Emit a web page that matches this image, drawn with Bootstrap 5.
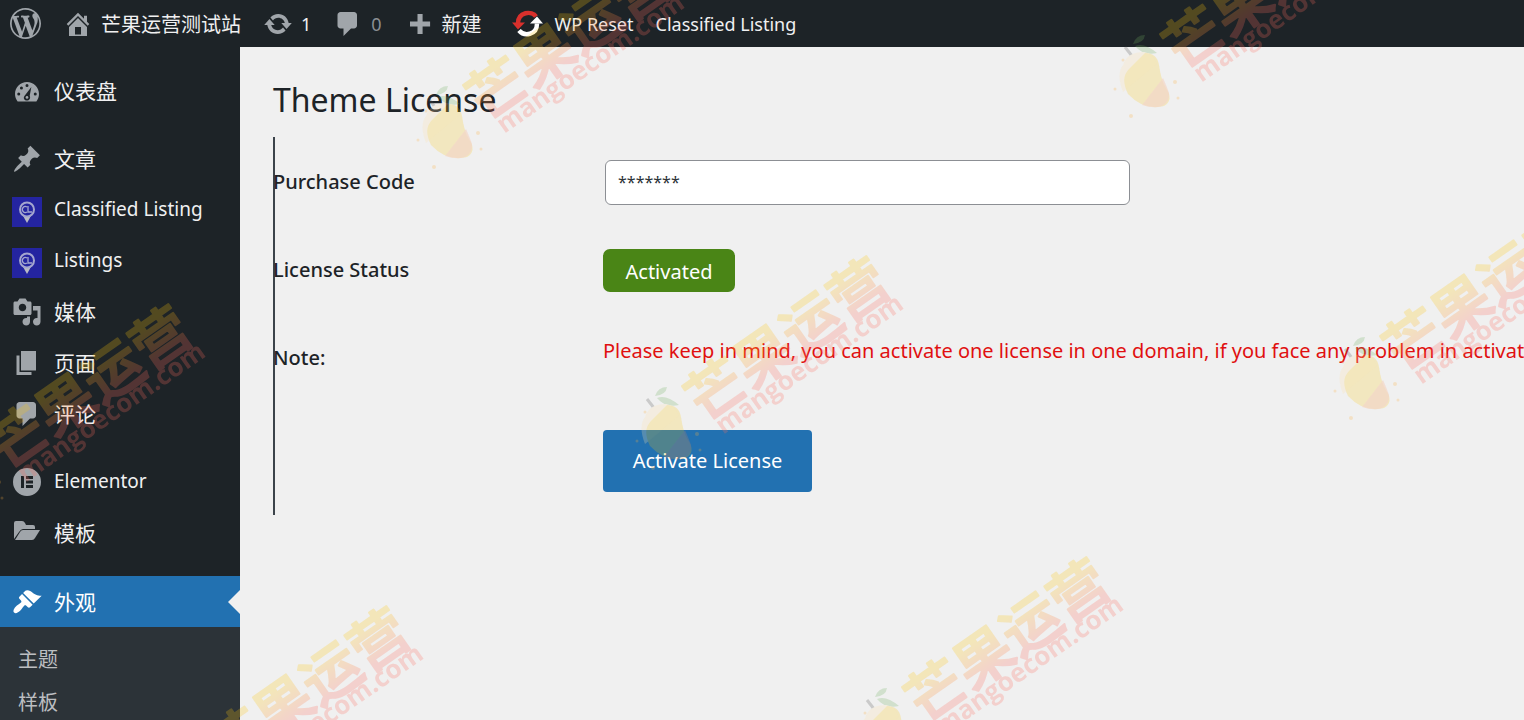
<!DOCTYPE html>
<html lang="zh-CN">
<head>
<meta charset="utf-8">
<meta name="viewport" content="width=device-width, initial-scale=1">
<title>Theme License</title>
<link href="https://cdn.jsdelivr.net/npm/bootstrap@5.3.0/dist/css/bootstrap.min.css" rel="stylesheet">
<style>
:root { --wp-dark: #1d2327; --wp-sub: #2c3338; --wp-blue: #2271b1; --wp-icon: #a0a5aa; --wp-page: #f0f0f0; }
body { font-family: "Noto Sans", "Noto Sans CJK SC", sans-serif; font-size: 20px; background: var(--wp-page); color: var(--wp-dark); overflow: hidden; }
a { color: #f0f0f1; text-decoration: none; }
.adminbar { background: var(--wp-dark); height: 47px; padding-left: 10px; gap: 22px; font-size: 18px; line-height: 48px; white-space: nowrap; }
.adminbar a { display: flex; align-items: center; gap: 8px; }
.adminbar .reset-link { padding-left: 8px; gap: 12px; }
.adminbar .pending { color: #8b8f93; }
.cjk { font-family: "Noto Sans CJK SC", sans-serif; font-size: 20px; }
.ico { width: 30px; height: 30px; flex: none; fill: var(--wp-icon); }
.ico-logo { width: 31px; height: 31px; }
.shell { min-height: calc(100vh - 47px); }
.sidemenu { width: 240px; background: var(--wp-dark); padding-top: 18px; font-size: 19px; }
.sidemenu a { display: flex; align-items: center; height: 51px; padding-left: 12px; gap: 12px; }
.sidemenu .cjk { font-size: 21px; }
.sidemenu .group-start { margin-top: 17px; }
.sidemenu .current-page { background: var(--wp-blue); color: #fff; position: relative; margin-top: 18px; }
.current-page .ico { fill: #fff; }
.current-page::after { content: ""; position: absolute; right: 0; top: 14px; border: 12px solid transparent; border-left: 0; border-right-color: var(--wp-page); }
.submenu { background: var(--wp-sub); padding: 10px 0; }
.sidemenu .submenu a { height: 43px; padding-left: 18px; color: #bcbec1; font-family: "Noto Sans CJK SC", sans-serif; font-size: 20px; }
.content-pane { padding: 28px 0 0 33px; overflow: hidden; }
.page-title { font-size: 32px; line-height: 50px; margin: 0 0 12px; font-weight: 400; }
.license-form { box-shadow: inset 2px 0 #3c434a; height: 378px; padding-top: 1px; white-space: nowrap; }
.field-line { display: flex; align-items: center; height: 88px; }
.field-label { width: 330px; flex: none; font-weight: 500; }
.code-input { width: 525px; height: 45px; margin-left: 2px; border: 1px solid #8c8f94; border-radius: 6px; padding: 0 12px; font-size: 16px; color: #2c3338; background: #fff; }
.status-pill { background: #4a8516; color: #fff; width: 132px; height: 43px; line-height: 45px; border-radius: 7px; text-align: center; }
.note-text { color: #e01010; margin-bottom: 14px; }
.save-btn { margin: 28px 0 0 330px; width: 209px; height: 62px; border-radius: 4px; background: var(--wp-blue); color: #fff; font-size: 20px; padding: 0; }
.watermark { position: fixed; inset: 0; width: 100%; height: 100%; pointer-events: none; }
.wm-name { font: 500 58px "Noto Sans CJK SC", sans-serif; stroke-width: 2px; stroke-linejoin: round; }
.wm-site { font: 700 26px "Open Sans", sans-serif; }
</style>
</head>
<body>
<nav class="adminbar d-flex align-items-center">
  <a href="#" aria-label="WordPress"><svg class="ico ico-logo" viewBox="0 0 20 20"><path d="M20 10c0-5.51-4.49-10-10-10C4.48 0 0 4.49 0 10c0 5.52 4.48 10 10 10 5.51 0 10-4.48 10-10zM7.78 15.37L4.37 6.22c.55-.02 1.17-.08 1.17-.08.5-.06.44-1.13-.06-1.11 0 0-1.45.11-2.37.11-.18 0-.37 0-.58-.01C4.12 2.69 6.87 1.11 10 1.11c2.33 0 4.45.87 6.05 2.34-.68-.11-1.65.39-1.65 1.58 0 .74.45 1.36.9 2.1.35.61.55 1.36.55 2.46 0 1.49-1.4 5-1.4 5l-3.03-8.37c.54-.02.82-.17.82-.17.5-.05.44-1.25-.06-1.22 0 0-1.44.12-2.38.12-.87 0-2.33-.12-2.33-.12-.5-.03-.56 1.2-.06 1.22l.92.08 1.26 3.41zM17.41 10c.24-.64.74-1.87.43-4.25.7 1.29 1.05 2.71 1.05 4.25 0 3.29-1.73 6.24-4.4 7.78.97-2.59 1.94-5.2 2.92-7.78zM6.1 18.09C3.12 16.65 1.11 13.53 1.11 10c0-1.3.23-2.48.72-3.59C3.25 10.3 4.67 14.2 6.1 18.09zm4.03-6.63l2.58 6.98c-.86.29-1.76.45-2.71.45-.79 0-1.57-.11-2.29-.33.81-2.38 1.62-4.74 2.42-7.1z"/></svg></a>
  <a href="#"><svg class="ico" viewBox="0 0 20 20"><path d="M16 8.5l1.53 1.53-1.06 1.06L10 4.6l-6.47 6.49-1.06-1.06L10 2.5l4 4v-2h2v4zm-6-2.46l6 5.99V18H4v-5.97zM12 17v-5H8v5h4z"/></svg><span class="cjk">芒果运营测试站</span></a>
  <a href="#"><svg class="ico" viewBox="0 0 20 20"><path d="M10.2 3.28c3.53 0 6.43 2.61 6.92 6h2.08l-3.5 4-3.5-4h2.32c-.45-1.97-2.21-3.45-4.32-3.45-1.45 0-2.73.71-3.54 1.78L4.95 5.66C6.23 4.2 8.11 3.28 10.2 3.28zm-.4 13.44c-3.52 0-6.43-2.61-6.92-6H.8l3.5-4c1.17 1.33 2.33 2.67 3.5 4H5.48c.45 1.97 2.21 3.45 4.32 3.45 1.45 0 2.73-.71 3.54-1.78l1.71 1.95c-1.28 1.46-3.15 2.38-5.25 2.38z"/></svg>1</a>
  <a href="#" class="pending"><svg class="ico" viewBox="0 0 20 20"><path d="M5 2h9c1.1 0 2 .9 2 2v7c0 1.1-.9 2-2 2h-2l-5 5v-5H5c-1.1 0-2-.9-2-2V4c0-1.1.9-2 2-2z"/></svg>0</a>
  <a href="#"><svg class="ico" viewBox="0 0 20 20"><path d="M9 3.3h3.400v5h5v3.400h-5v5H9v-5H4V8.300h5z"/></svg><span class="cjk">新建</span></a>
  <a href="#" class="reset-link"><svg class="ico ico-logo" viewBox="0 0 31 26"><g fill="none" stroke-width="4.500"><path d="M6 13C6 1 20 0 24 6" stroke="#d9302c"/><path d="M25 13C25 25 12 26 7 20" stroke="#fff"/></g><path d="M0 12h13L6 19z" fill="#d9302c"/><path d="M31 13H18l7-7z" fill="#fff"/></svg>WP Reset</a>
  <a href="#">Classified Listing</a>
</nav>
<div class="shell d-flex">
  <nav class="sidemenu flex-shrink-0">
    <a href="#"><svg class="ico" viewBox="0 0 20 20"><path fill-rule="evenodd" d="M3.760 17h12.480C17.340 15.630 18 13.890 18 12c0-4.420-3.580-8-8-8s-8 3.580-8 8c0 1.890.66 3.630 1.760 5zM9 6.300a1 1 0 1 0 2 0a1 1 0 1 0-2 0zM5.300 8a1 1 0 1 0 2 0a1 1 0 1 0-2 0zM3.500 12a1 1 0 1 0 2 0a1 1 0 1 0-2 0zM14.500 12a1 1 0 1 0 2 0a1 1 0 1 0-2 0zM12.900 7.400l-1.100 5.800c.8 1.700-.3 3.200-1.800 3.200-1.700 0-2.700-1.700-1.700-3.100z"/><circle cx="10" cy="14.300" r=".9"/></svg><span class="cjk">仪表盘</span></a>
    <a href="#" class="group-start"><svg class="ico" viewBox="0 0 20 20"><path d="M10.440 3.020l1.820-1.820 6.360 6.350-1.830 1.820c-1.050-.68-2.480-.57-3.410.36l-.75.75c-.92.93-1.040 2.350-.35 3.410l-1.830 1.820-2.410-2.410-2.800 2.790c-.42.42-3.380 2.710-3.800 2.290s1.860-3.390 2.280-3.810l2.790-2.790L4.100 9.360l1.830-1.820c1.050.69 2.480.57 3.400-.36l.75-.75c.93-.92 1.050-2.350.36-3.410z"/></svg><span class="cjk">文章</span></a>
    <a href="#"><svg class="ico mt-1" viewBox="0 0 30 30"><path fill="#2424a0" d="M0 0h30v30H0z"/><path d="M10 17l5 9 5-9z" fill="#b9bac4"/><circle cx="15" cy="12.500" r="7" fill="#2424a0" stroke="#a4a6cf" stroke-width="2"/><path d="M15 10a3 3 0 1 0 0 5M16 9v6h4" fill="none" stroke="#a4a6cf" stroke-width="1.300"/></svg>Classified Listing</a>
    <a href="#"><svg class="ico mt-1" viewBox="0 0 30 30"><path fill="#2424a0" d="M0 0h30v30H0z"/><path d="M10 17l5 9 5-9z" fill="#b9bac4"/><circle cx="15" cy="12.500" r="7" fill="#2424a0" stroke="#a4a6cf" stroke-width="2"/><path d="M15 10a3 3 0 1 0 0 5M16 9v6h4" fill="none" stroke="#a4a6cf" stroke-width="1.300"/></svg>Listings</a>
    <a href="#"><svg class="ico" viewBox="0 0 20 20"><path d="M13 11V4c0-.55-.45-1-1-1h-1.670L9 1H5L3.670 3H2c-.55 0-1 .45-1 1v7c0 .55.45 1 1 1h10c.55 0 1-.45 1-1zM7 4.500c1.380 0 2.500 1.120 2.500 2.500S8.380 9.500 7 9.500 4.500 8.380 4.500 7 5.620 4.500 7 4.500zM14 6h5v10.500c0 1.380-1.120 2.500-2.500 2.500S14 17.880 14 16.500s1.120-2.500 2.500-2.500c.17 0 .34.020.5.050V9h-3V6zm-4 8.050V13h2v3.500c0 1.380-1.120 2.500-2.500 2.500S7 17.880 7 16.500 8.120 14 9.500 14c.17 0 .34.020.5.050z"/></svg><span class="cjk">媒体</span></a>
    <a href="#"><svg class="ico" viewBox="0 0 20 20"><path d="M6 15V2h10v13H6zm-1 1h8v2H3V5h2v11z"/></svg><span class="cjk">页面</span></a>
    <a href="#"><svg class="ico" viewBox="0 0 20 20"><path d="M5 2h9c1.100 0 2 .9 2 2v7c0 1.100-.9 2-2 2h-2l-5 5v-5H5c-1.100 0-2-.9-2-2V4c0-1.100.9-2 2-2z"/></svg><span class="cjk">评论</span></a>
    <a href="#" class="group-start"><svg class="ico" viewBox="0 0 30 30"><path fill-rule="evenodd" d="M15 1a14 14 0 1 0 0 28a14 14 0 1 0 0-28zM9 9h3v12H9zM14 9h7v3h-7zM14 13.500h7v3h-7zM14 18h7v3h-7z"/></svg>Elementor</a>
    <a href="#"><svg class="ico" viewBox="0 0 30 30"><path d="M2 21V5q0-2 2-2h6q2 0 3 2l1 2h7q2 0 2 2v2H11q-2 0-4 3zM3 22l5-8q1-2 3-2h17l-5 8q-1 2-3 2z"/></svg><span class="cjk">模板</span></a>
    <a href="#" class="current-page"><svg class="ico" viewBox="0 0 20 20"><path d="M14.480 11.060L7.410 3.990l1.500-1.500c.5-.56 2.300-.47 3.510.32 1.210.8 1.430 1.280 2.910 2.100 1.180.64 2.450 1.260 4.450.85zm-.71.71L6.700 4.700 4.930 6.470c-.39.39-.39 1.020 0 1.410l1.060 1.060c.39.39.39 1.030 0 1.420-.6.6-1.430 1.110-2.210 1.690-.35.26-.7.53-1.010.84C1.430 14.230.4 16.080 1.400 17.070c.99 1 2.840-.03 4.180-1.360.31-.31.58-.66.85-1.020.57-.78 1.080-1.610 1.690-2.210.39-.39 1.020-.39 1.410 0l1.060 1.060c.39.39 1.020.39 1.410 0z"/></svg><span class="cjk">外观</span></a>
    <div class="submenu"><a href="#">主题</a><a href="#">样板</a></div>
  </nav>
  <main class="content-pane flex-grow-1">
    <h1 class="page-title">Theme License</h1>
    <form class="license-form">
      <div class="field-line"><label class="field-label" for="code">Purchase Code</label><input class="code-input" id="code" type="text" value="*******"></div>
      <div class="field-line"><span class="field-label">License Status</span><span class="status-pill">Activated</span></div>
      <div class="field-line"><span class="field-label">Note:</span><span class="note-text">Please keep in mind, you can activate one license in one domain, if you face any problem in activation</span></div>
      <button class="btn save-btn" type="button">Activate License</button>
    </form>
  </main>
</div>
<svg class="watermark" aria-hidden="true">
  <defs>
    <linearGradient id="wmName" gradientUnits="userSpaceOnUse" x1="0" y1="2" x2="0" y2="50"><stop offset=".15" stop-color="#fcc810"/><stop offset=".9" stop-color="#ff6e5f"/></linearGradient>
    <g id="wm" opacity=".24">
      <g transform="translate(2 -7)">
      <path d="M-7 8q3-9 12-9q-1 8-12 9zM-5 10q9-4 22 7q-14 3-22-7z" fill="#70b060"/>
      <path d="M-15 11l7 9" stroke="#555" stroke-width="3"/>
      <path d="M-17 29q4-13 21-13q9 1 13 12l-34 28q-7-18 0-27z" fill="#fde3b0"/>
      <path d="M-12 58q-8-16 1-25L5 17q12 0 14 12q2 15 7 23Q34 64 24 70Q4 75-12 58z" fill="#fcc810" opacity=".9"/>
      <path d="M23 42q4 9 6 15q1 9-7 13q-8 3-20-1z" fill="#ff8a50" opacity=".7"/>
      <g fill="#fcb040"><circle cx="-25" cy="53" r="1.500"/><circle cx="-9" cy="80" r="2"/><circle cx="35" cy="46" r="2"/><circle cx="38" cy="62" r="1.500"/><circle cx="-17" cy="24" r="1.500"/></g>
      </g>
      <g transform="rotate(-35)"><text class="wm-name" x="20" y="49" fill="url(#wmName)" stroke="url(#wmName)">芒果运营</text><text class="wm-site" x="29" y="69" fill="#ff6e5f">mangoecom.com</text></g>
    </g>
  </defs>
  <use href="#wm" x="441" y="94"/><use href="#wm" x="1138" y="43"/><use href="#wm" x="660" y="395"/><use href="#wm" x="1358" y="345"/><use href="#wm" x="-38" y="443"/><use href="#wm" x="180" y="745"/><use href="#wm" x="880" y="696"/>
</svg>
<script src="https://cdn.jsdelivr.net/npm/bootstrap@5.3.0/dist/js/bootstrap.bundle.min.js"></script>
</body>
</html>
